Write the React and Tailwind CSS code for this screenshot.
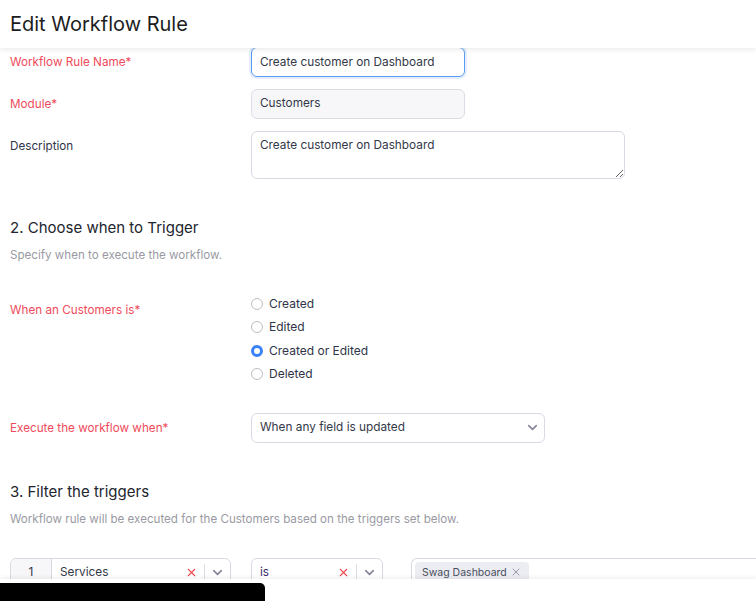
import { ChevronDown, X } from 'lucide-react';

const font = { fontFamily: 'Inter, "Noto Sans", sans-serif' };

function Radio({ label, checked }) {
  return (
    <label className="flex h-5 items-center gap-[6px] text-[12px] text-[#2f3447]">
      {checked ? (
        <span className="h-3 w-3 rounded-full border-[3.5px] border-[#3b82f6] bg-white" />
      ) : (
        <span className="h-3 w-3 rounded-full border border-[#bdbdc4] bg-white" />
      )}
      {label}
    </label>
  );
}

function Row({ label, required, children, labelPad = 'pt-[7px]' }) {
  return (
    <div className="flex items-start">
      <div className={`w-[241px] shrink-0 text-[11.7px] leading-4 ${labelPad} ${required ? 'text-[#ee4b5c]' : 'text-[#2f3447]'}`}>
        {label}
        {required && '*'}
      </div>
      {children}
    </div>
  );
}

function SelectIcons({ clear }) {
  return (
    <div className="flex h-full items-center">
      {clear && <X size={13} strokeWidth={2} className="mr-[6px] text-[#f0484f]" />}
      <div className="h-[18px] w-px bg-[#dcdce4]" />
      <ChevronDown size={15} strokeWidth={2.6} className="mx-[5px] text-[#85859a]" />
    </div>
  );
}

export default function App() {
  return (
    <div className="flex h-[601px] w-full flex-col overflow-hidden bg-white" style={font}>
      {/* Header */}
      <header className="relative z-10 flex h-12 shrink-0 items-center bg-white px-[10px] shadow-[0_2px_5px_rgba(0,0,0,0.08)]">
        <h1 className="text-[20px] font-normal leading-6 text-[#1c1d22]">Edit Workflow Rule</h1>
      </header>

      {/* Scrolled body */}
      <main className="flex-1 overflow-hidden">
        <div className="-mt-px px-[10px]">
          <div className="flex flex-col gap-3">
            <Row label="Workflow Rule Name" required>
              <input
                readOnly
                value="Create customer on Dashboard"
                className="h-[30px] w-[214px] rounded-md border border-[#5b9cf2] bg-white px-2 text-[11.8px] text-[#333848] shadow-[0_0_0_2px_rgba(74,144,240,0.15)] outline-none"
              />
            </Row>
            <Row label="Module" required>
              <div className="flex h-[30px] w-[214px] items-center rounded-md border border-[#dcdce6] bg-[#f7f7fa] px-2 text-[11.8px] text-[#333848]">
                Customers
              </div>
            </Row>
            <Row label="Description">
              <textarea
                readOnly
                value="Create customer on Dashboard"
                className="h-[48px] w-[374px] rounded-md border border-[#d9d9e3] bg-white px-2 py-[5px] text-[11.8px] leading-4 text-[#333848] outline-none"
              />
            </Row>
          </div>

          {/* Section 2 */}
          <section className="mt-[37px]">
            <h2 className="text-[15px] leading-6 text-[#22252e]">2. Choose when to Trigger</h2>
            <p className="mt-[7px] text-[11.6px] leading-4 text-[#9a9aa3]">Specify when to execute the workflow.</p>

            <div className="mt-[31px]">
              <Row label="When an Customers is" required labelPad="pt-[8px]">
                <div className="flex flex-col gap-[3.3px]">
                  <Radio label="Created" />
                  <Radio label="Edited" />
                  <Radio label="Created or Edited" checked />
                  <Radio label="Deleted" />
                </div>
              </Row>
            </div>

            <div className="mt-[29px]">
              <Row label="Execute the workflow when" required>
                <div className="flex h-[30px] w-[294px] items-center justify-between rounded-md border border-[#d9d9e3] bg-white pl-2 pr-[4px] text-[11.8px] text-[#333848]">
                  When any field is updated
                  <ChevronDown size={15} strokeWidth={2.6} className="text-[#85859a]" />
                </div>
              </Row>
            </div>
          </section>

          {/* Section 3 */}
          <section className="mt-[37px]">
            <h2 className="text-[15px] leading-6 text-[#22252e]">3. Filter the triggers</h2>
            <p className="mt-[7px] text-[11.6px] leading-4 text-[#9a9aa3]">
              Workflow rule will be executed for the Customers based on the triggers set below.
            </p>

            <div className="-mr-[10px] mt-[31px] flex items-start">
              <div className="flex h-[30px] w-[221px] rounded-md border border-[#d9d9e3] bg-white">
                <div className="flex w-[41px] items-center justify-center rounded-l-md border-r border-[#d9d9e3] bg-[#f7f7fa] text-[11.8px] text-[#333848]">
                  1
                </div>
                <div className="flex flex-1 items-center justify-between pl-2 text-[11.8px] text-[#333848]">
                  Services
                  <SelectIcons clear />
                </div>
              </div>
              <div className="ml-5 flex h-[30px] w-[132px] items-center justify-between rounded-md border border-[#d9d9e3] bg-white pl-2 text-[11.8px] text-[#3a2a6a]">
                is
                <SelectIcons clear />
              </div>
              <div className="ml-7 flex h-[30px] flex-1 items-start rounded-l-md border border-r-0 border-[#d9d9e3] bg-white pl-[3px] pt-[3px]">
                <span className="flex h-[21px] items-center gap-[3px] rounded bg-[#ecedf2] px-[7px] text-[10.5px] text-[#4a4d5c]">
                  Swag Dashboard
                  <X size={12} strokeWidth={1.3} className="text-[#6b6e7e]" />
                </span>
              </div>
            </div>
          </section>
        </div>
      </main>

      {/* Footer */}
      <footer className="relative z-10 flex h-[22px] shrink-0 items-end bg-white shadow-[0_-2px_4px_rgba(0,0,0,0.06)]">
        <div className="h-[18px] w-[265px] rounded-tr-[5px] bg-black" />
      </footer>
    </div>
  );
}
